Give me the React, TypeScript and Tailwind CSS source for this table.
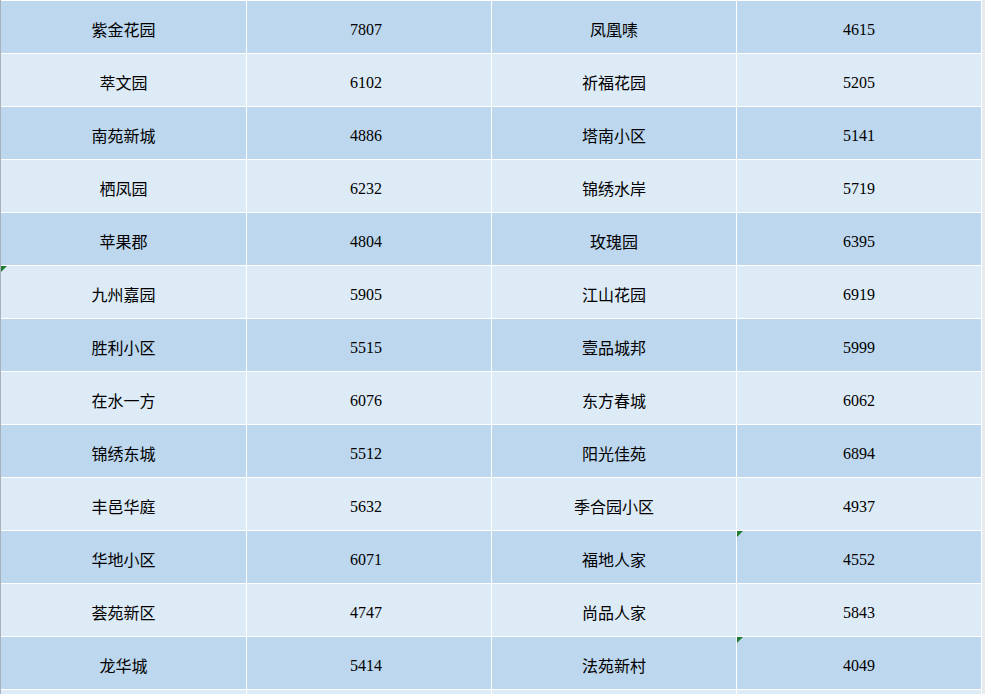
import React from 'react'

type Row = { a: string; an: string; b: string; bn: string; markA?: boolean; markB?: boolean }

const rows: Row[] = [
  { a: '紫金花园', an: '7807', b: '凤凰嗉', bn: '4615' },
  { a: '萃文园', an: '6102', b: '祈福花园', bn: '5205' },
  { a: '南苑新城', an: '4886', b: '塔南小区', bn: '5141' },
  { a: '栖凤园', an: '6232', b: '锦绣水岸', bn: '5719' },
  { a: '苹果郡', an: '4804', b: '玫瑰园', bn: '6395' },
  { a: '九州嘉园', an: '5905', b: '江山花园', bn: '6919', markA: true },
  { a: '胜利小区', an: '5515', b: '壹品城邦', bn: '5999' },
  { a: '在水一方', an: '6076', b: '东方春城', bn: '6062' },
  { a: '锦绣东城', an: '5512', b: '阳光佳苑', bn: '6894' },
  { a: '丰邑华庭', an: '5632', b: '季合园小区', bn: '4937' },
  { a: '华地小区', an: '6071', b: '福地人家', bn: '4552', markB: true },
  { a: '荟苑新区', an: '4747', b: '尚品人家', bn: '5843' },
  { a: '龙华城', an: '5414', b: '法苑新村', bn: '4049', markB: true },
  { a: '', an: '', b: '', bn: '' },
]

const cjk = "font-['SimSun','Noto_Sans_CJK_SC',sans-serif] text-[16px] pt-[3px]"
const num = "font-['Liberation_Serif','Noto_Sans_CJK_SC',serif] text-[16px] pt-[5px]"

function Mark() {
  return (
    <span className="absolute left-0 top-0 h-0 w-0 border-t-[6px] border-r-[6px] border-t-[#1f7a32] border-r-transparent" />
  )
}

function Cell({ text, dark, digits, mark, shift }: { text: string; dark: boolean; digits?: boolean; mark?: boolean; shift?: boolean }) {
  return (
    <div
      className={`relative flex h-[52px] items-center justify-center text-black ${
        dark ? 'bg-[#bdd7ee]' : 'bg-[#ddebf7]'
      } ${digits ? num : cjk} ${shift ? 'pr-[6px]' : ''}`}
    >
      {mark && <Mark />}
      {text}
    </div>
  )
}

export default function App() {
  return (
    <div className="h-[694px] w-[985px] overflow-hidden bg-[#e6ebf0]">
      <div className="w-[982px] border-l border-[#a9b1b9] bg-white pt-px">
        <div className="grid grid-cols-[245px_244px_244px_244px] gap-px border-r border-white">
          {rows.map((r, i) => {
            const dark = i % 2 === 0
            return (
              <React.Fragment key={i}>
                <Cell text={r.a} dark={dark} mark={r.markA} />
                <Cell text={r.an} dark={dark} digits shift />
                <Cell text={r.b} dark={dark} />
                <Cell text={r.bn} dark={dark} digits mark={r.markB} />
              </React.Fragment>
            )
          })}
        </div>
      </div>
    </div>
  )
}
